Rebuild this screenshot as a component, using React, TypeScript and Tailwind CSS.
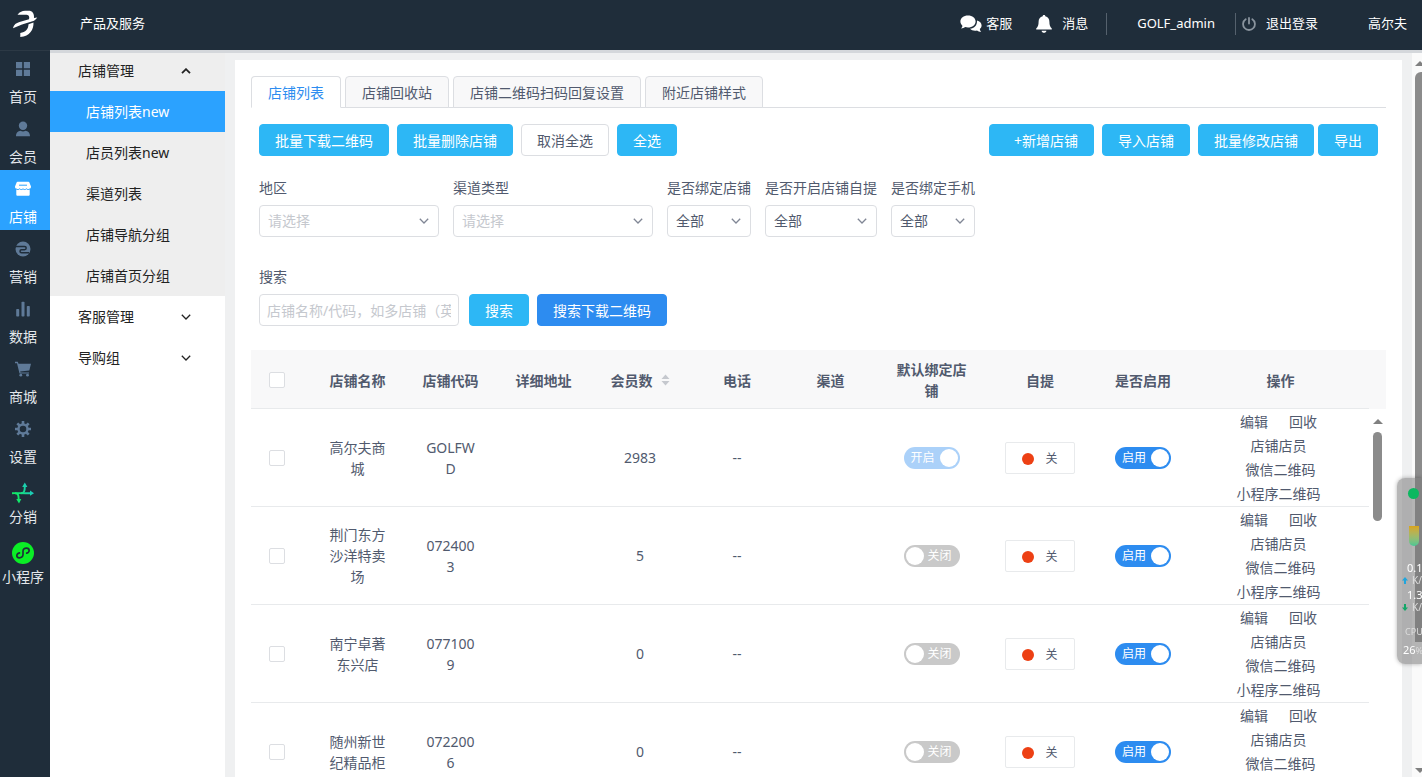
import React, { useState } from 'react';

const FONT = "font-['Noto_Sans','Noto_Sans_CJK_SC',sans-serif]";

const Chevron = ({ up = false, className = '' }: { up?: boolean; className?: string }) => (
  <svg viewBox="0 0 10 6" className={className} fill="none" stroke="currentColor" strokeWidth={up ? 1.8 : 1.3} aria-hidden="true">
    <path d={up ? 'M1 5.2 5 1.2 9 5.2' : 'M.8.8 5 5 9.2.8'} />
  </svg>
);

const Logo = () => (
  <svg viewBox="0 0 26 28" className="h-7 w-[26px]" fill="#fff" aria-hidden="true">
    <path d="M5.500 4.800C8 1.800 10 .8 13 .8h3.500C20.500.8 22.300 3.500 22 8l3.200-.6C24 9.300 22.800 10.500 20.500 11.300L10 14.500 1 18.200C2 14.300 4 13 7.500 11.900L17 9.300C17.800 6 16.500 4.800 13.500 4.800z" />
    <path d="M16.500 14.300 21.500 12.600C21.800 19.500 18 26.500 8.300 27v-4C13.500 22.300 16.300 19.500 16.500 14.300z" />
  </svg>
);

const NavIcon = ({ name }: { name: string }) => {
  const base = 'h-4 w-4';
  switch (name) {
    case 'home':
      return (
        <svg viewBox="0 0 16 16" className={base} fill="currentColor"><path d="M1 1h6.200v6.200H1zM8.800 1H15v6.200H8.800zM1 8.800h6.200V15H1zM8.800 8.800H15V15H8.800z" /></svg>
      );
    case 'member':
      return (
        <svg viewBox="0 0 16 16" className={base} fill="currentColor"><circle cx="8" cy="4.800" r="4.200" /><path d="M1 15.200c0-3.500 2-5 4.500-5.400 1.500.8 3.500.8 5 0 2.500.4 4.500 1.900 4.500 5.400z" /></svg>
      );
    case 'shop':
      return (
        <svg viewBox="0 0 16 16" className={base}>
          <path fill="#fff" d="M3 .8h10c.8 0 1.200.3 1.500 1L16 5.600c0 1.400-.6 2-1.300 2.300v5.600c0 .9-.5 1.300-1.300 1.300H2.600c-.8 0-1.300-.4-1.300-1.300V7.900C.6 7.600 0 7 0 5.600l1.500-3.800c.3-.7.7-1 1.500-1z" />
          <path stroke="#2ba2ff" fill="none" strokeWidth="1" d="M1 7.800c1.200 1 2.700 1 3.600 0 1 1 2.400 1 3.400 0 1 1 2.400 1 3.400 0 1 1 2.500 1 3.600 0M4 4.200h8" />
        </svg>
      );
    case 'market':
      return (
        <svg viewBox="0 0 16 16" className={base}>
          <circle cx="8" cy="8" r="7.500" fill="currentColor" />
          <path stroke="#1f2d3a" fill="none" strokeWidth="1.500" d="M0 5.400h9.500a1.700 1.700 0 0 1 0 3.400h-3a1.500 1.500 0 0 0 0 3H14" />
        </svg>
      );
    case 'data':
      return (
        <svg viewBox="0 0 16 16" className={base} fill="currentColor"><rect x="1.200" y="8" width="3" height="7.500" rx=".8" /><rect x="6.500" y=".8" width="3" height="14.700" rx=".8" /><rect x="11.800" y="5" width="3" height="10.500" rx=".8" /></svg>
      );
    case 'mall':
      return (
        <svg viewBox="0 0 16 16" className={base} fill="currentColor"><path d="M0 .8h2.800l.7 2H16L14.300 9.500 5.200 10.400l.3 1H14v1.200H4.500L2 2.200H0z" /><circle cx="5.800" cy="14.200" r="1.400" /><circle cx="12.500" cy="14.200" r="1.400" /></svg>
      );
    case 'setting':
      return (
        <svg viewBox="0 0 16 16" className={base} fill="none" stroke="currentColor">
          <circle cx="8" cy="8" r="4.500" strokeWidth="2.400" />
          <path strokeWidth="2.600" d="M8 0v3M8 13v3M0 8h3M13 8h3M2.300 2.300l2.200 2.200M11.500 11.500l2.200 2.200M2.300 13.700l2.200-2.200M11.500 4.500l2.200-2.200" />
        </svg>
      );
    case 'distribute':
      return (
        <svg viewBox="0 0 22 22" className="h-[22px] w-[22px]" fill="none">
          <defs>
            <linearGradient id="dist" gradientUnits="userSpaceOnUse" x1="0" y1="18" x2="20" y2="4">
              <stop offset="0.300" stopColor="#12e86a" /><stop offset="1" stopColor="#1fc3cf" />
            </linearGradient>
          </defs>
          <g stroke="url(#dist)" strokeWidth="1.900">
            <path d="M0 11.200C2.500 11 5 11.300 19 11.200" />
            <path d="M3 11.200C5.800 11.300 6.700 12.500 6.700 17.500" />
            <path d="M9 11.200C12 11 12.800 9.500 12.800 4.500" />
          </g>
          <path fill="url(#dist)" d="M12.800.5 15.400 5H10.200zM22 11.200 18 13.800V8.600zM7 21.500 4.300 17h5z" />
        </svg>
      );
    default:
      return (
        <svg viewBox="0 0 22 22" className="h-[22px] w-[22px]">
          <circle cx="11" cy="11" r="11" fill="#0bee26" />
          <path fill="none" stroke="#1f2d3a" strokeWidth="1.700" strokeLinecap="round" d="M7.500 10.800c-3.400.7-3.600 5-.3 5.100 2.400.1 3.800-1.400 3.800-3.400V9.300c0-2 1.400-3.300 3.600-3.200 3.300.1 3.400 4.300.1 5.100" />
        </svg>
      );
  }
};

const navItems = [
  ['home', '首页'], ['member', '会员'], ['shop', '店铺'], ['market', '营销'], ['data', '数据'],
  ['mall', '商城'], ['setting', '设置'], ['distribute', '分销'], ['mini', '小程序'],
];

const Header = () => (
  <header className="flex h-[50px] shrink-0 items-center bg-[#1f2d3a] pb-[3px] text-[13px] text-white">
    <a href="#" aria-label="主页" className="flex w-[50px] justify-center"><Logo /></a>
    <a href="#" className="ml-[30px]">产品及服务</a>
    <div className="ml-auto flex items-center">
      <a href="#" className="flex items-center gap-1">
        <svg viewBox="0 0 22 18" className="h-[18px] w-[22px]" fill="#fff" aria-hidden="true">
          <path d="M8 .5c4.400 0 7.600 2.600 7.600 6s-3.200 6-7.600 6c-1 0-2-.1-2.800-.4-1 .8-2.400 1.300-4.200 1.300 1-.9 1.400-1.800 1.400-2.700C1.200 9.600.4 8.200.4 6.500c0-3.400 3.200-6 7.600-6z" />
          <path d="M17 5.500c2.700.7 4.600 2.500 4.600 4.900 0 1.500-.7 2.700-1.800 3.600 0 1 .5 1.900 1.400 2.800-1.800 0-3.200-.5-4.200-1.300-2.700.6-5.600-.1-7-1.700 4.300-.4 7.300-3.300 7-8.300z" />
        </svg>
        客服
      </a>
      <a href="#" className="ml-6 flex items-center gap-[10px]">
        <svg viewBox="0 0 16 18" className="h-[18px] w-4" fill="#fff" aria-hidden="true">
          <path d="M8 0c.8 0 1.300.5 1.300 1.300C12 2 13.400 4 13.400 6.800c0 3.500.7 5.200 2.400 6.700v1H.2v-1c1.700-1.500 2.400-3.200 2.400-6.700C2.600 4 4 2 6.700 1.300 6.700.5 7.200 0 8 0zM5.600 15.800h4.800c-.2 2.700-4.600 2.700-4.800 0z" />
        </svg>
        消息
      </a>
      <span className="ml-[18px] h-[22px] w-px bg-[#55616d]" />
      <span className="ml-[30px]">GOLF_admin</span>
      <span className="ml-5 h-[22px] w-px bg-[#55616d]" />
      <button type="button" className="ml-[6px] flex items-center gap-[10px]">
        <svg viewBox="0 0 14 14" className="h-[14px] w-[14px] text-[#8a949e]" fill="none" stroke="currentColor" strokeWidth="1.800" strokeLinecap="round" aria-hidden="true">
          <path d="M7 .9v5.600M3.700 2.200a5.900 5.900 0 1 0 6.600 0" />
        </svg>
        退出登录
      </button>
      <span className="mr-[15px] ml-[50px]">高尔夫</span>
    </div>
  </header>
);

const Rail = () => (
  <nav className="w-[50px] shrink-0 bg-[#1f2d3a] shadow-[inset_0_1px_0_#2c3945]">
    {navItems.map(([icon, label]) => (
      <a key={icon} href="#" className={`flex h-[60px] flex-col items-center pr-1 text-sm whitespace-nowrap ${icon === 'shop' ? 'bg-[#2ba2ff] text-white' : 'text-[#e4e8ec]'}`}>
        <span className={`flex h-[38px] shrink-0 items-center text-[#5f7a98] ${icon === 'distribute' || icon === 'mini' ? 'pt-2' : ''}`}><NavIcon name={icon} /></span>
        <span className="-mt-px leading-5">{label}</span>
      </a>
    ))}
  </nav>
);

const Side = () => (
  <aside className="w-[175px] shrink-0 bg-white text-sm text-[#222]">
    <div className="bg-[#eee] shadow-[inset_0_3px_0_#d4d7db]">
      <button type="button" className="flex h-[41px] w-full items-center justify-between pr-[34px] pl-7">店铺管理<Chevron up className="h-[6px] w-[10px]" /></button>
      {['店铺列表new', '店员列表new', '渠道列表', '店铺导航分组', '店铺首页分组'].map((t, i) => (
        <a key={t} href="#" className={`flex h-[41px] items-center pl-9 ${i === 0 ? 'bg-[#2ba2ff] text-white' : ''}`}>{t}</a>
      ))}
    </div>
    {['客服管理', '导购组'].map((t) => (
      <button key={t} type="button" className="flex h-[41px] w-full items-center justify-between pr-[34px] pl-7">{t}<Chevron className="h-[6px] w-[10px]" /></button>
    ))}
  </aside>
);

const Btn = ({ children, kind = 'info', pad = 'px-[15px]', className = '' }: { children: React.ReactNode; kind?: 'info' | 'primary' | 'plain'; pad?: string; className?: string }) => {
  const look = {
    info: 'border-[#2db7f5] bg-[#2db7f5] text-white',
    primary: 'border-[#2d8cf0] bg-[#2d8cf0] text-white',
    plain: 'border-[#dcdee2] bg-white text-[#515a6e]',
  }[kind];
  return <button type="button" className={`h-8 rounded border pt-[2px] text-sm whitespace-nowrap ${pad} ${look} ${className}`}>{children}</button>;
};

const Pick = ({ id, label, value, width, muted = false }: { id: string; label: string; value: string; width: string; muted?: boolean }) => (
  <div className={width}>
    <label htmlFor={id} className="block leading-6 whitespace-nowrap">{label}</label>
    <div className="relative mt-[5px]">
      <select id={id} className={`h-8 w-full appearance-none rounded border border-[#dcdee2] bg-white px-2 text-sm ${muted ? 'text-[#c5c8ce]' : 'text-[#515a6e]'}`}>
        <option>{value}</option>
      </select>
      <Chevron className="pointer-events-none absolute top-[13px] right-[10px] h-[6px] w-[10px] text-[#808695]" />
    </div>
  </div>
);

const Switch = ({ on, text, label, faded = false }: { on: boolean; text: string; label: string; faded?: boolean }) => (
  <button
    type="button"
    role="switch"
    aria-checked={on}
    aria-label={label}
    className={`inline-flex h-[22px] w-14 items-center justify-between rounded-full align-middle text-xs text-white ${on ? 'flex-row pr-[2px] pl-[7px]' : 'flex-row-reverse pr-2 pl-[2px]'} ${on ? (faded ? 'bg-[#abd1f9]' : 'bg-[#2d8cf0]') : 'bg-[#c9c9c9]'}`}
  >
    <span>{text}</span>
    <span className="h-[18px] w-[18px] rounded-full bg-white" />
  </button>
);

const Check = ({ label }: { label: string }) => (
  <input type="checkbox" aria-label={label} className="block h-4 w-4 appearance-none rounded-xs border border-[#dcdee2] bg-white checked:bg-[#2d8cf0]" />
);

const rows = [
  { name: '高尔夫商城', code: 'GOLFWD', count: 2983, bound: true },
  { name: '荆门东方沙洋特卖场', code: '0724003', count: 5, bound: false },
  { name: '南宁卓著东兴店', code: '0771009', count: 0, bound: false },
  { name: '随州新世纪精品柜', code: '0722006', count: 0, bound: false },
];

const StoreTable = () => (
  <div className="mt-6 flex">
    <table className="min-w-0 flex-1 table-fixed border-separate border-spacing-0 text-center leading-[21px]">
      <colgroup>
        <col className="w-[60px]" /><col className="w-[93px]" /><col className="w-[93px]" /><col className="w-[93px]" />
        <col className="w-[100px]" /><col className="w-[94px]" /><col className="w-[93px]" /><col className="w-[109px]" />
        <col className="w-[108px]" /><col className="w-[98px]" /><col className="w-[177px]" />
      </colgroup>
      <thead>
        <tr className="h-[59px] [&>th]:border-b [&>th]:border-[#e8eaec] [&>th]:bg-[#f8f8f9] [&>th]:px-[18px] [&>th]:pt-[2px] [&>th]:font-bold">
          <th><Check label="选择全部" /></th>
          <th>店铺名称</th>
          <th>店铺代码</th>
          <th>详细地址</th>
          <th className="whitespace-nowrap">
            <span className="inline-flex items-center gap-2">会员数
              <svg viewBox="0 0 9 12" className="h-3 w-[9px]" fill="#c5c8ce" aria-hidden="true"><path d="M4.500.5 8.500 5h-8zM4.500 11.500.5 7h8z" /></svg>
            </span>
          </th>
          <th>电话</th>
          <th>渠道</th>
          <th>默认绑定店铺</th>
          <th>自提</th>
          <th>是否启用</th>
          <th>操作</th>
        </tr>
      </thead>
      <tbody>
        {rows.map((r) => (
          <tr key={r.code} className="h-[98px] [&>td]:border-b [&>td]:border-[#e8eaec]">
            <td className="px-[18px]"><Check label={r.name} /></td>
            <td className="px-[18px]">{r.name}</td>
            <td className="px-5 break-all">{r.code}</td>
            <td />
            <td>{r.count}</td>
            <td>--</td>
            <td />
            <td><Switch on={r.bound} faded text={r.bound ? '开启' : '关闭'} label="默认绑定店铺" /></td>
            <td>
              <button type="button" className="inline-flex h-8 w-[70px] items-center justify-center gap-[11px] rounded-xs border border-[#e8eaec] bg-white pt-[2px] align-middle text-xs">
                <span className="h-3 w-3 rounded-full bg-[#ed4014]" />关
              </button>
            </td>
            <td><Switch on text="启用" label="是否启用" /></td>
            <td className="leading-6">
              <div className="flex flex-col items-center">
                <div className="mr-1 flex gap-[21px]"><a href="#">编辑</a><a href="#">回收</a></div>
                <a href="#" className="mr-1">店铺店员</a>
                <a href="#">微信二维码</a>
                <a href="#" className="mr-1">小程序二维码</a>
              </div>
            </td>
          </tr>
        ))}
      </tbody>
    </table>
    <div className="flex w-[17px] shrink-0 flex-col items-center" aria-hidden="true">
      <div className="h-[59px] w-full bg-[#f8f8f9]" />
      <div className="mt-[10px] h-0 w-0 border-x-[5px] border-b-[5px] border-x-transparent border-b-[#808080]" />
      <div className="mt-2 h-[89px] w-[9px] rounded-full bg-[#8b8b8b]" />
    </div>
  </div>
);

const SystemMonitor = () => (
  <div className="fixed top-[478px] right-0 h-[186px] w-[25px] overflow-hidden rounded-l-lg bg-[#7a7a7a]/55 text-[11px] leading-3 whitespace-nowrap text-white shadow-[0_0_4px_rgba(0,0,0,0.3)]">
    <div className="mt-[10px] ml-[11px] h-[11px] w-[11px] rounded-full bg-[#0cb860]" />
    <div className="mt-[27px] ml-3 h-5 w-[10px] rounded-b-md bg-gradient-to-b from-[#d9a515] to-[#45c795]" />
    <div className="mt-4 pl-[10px]">0.1</div>
    <div className="flex items-center gap-1 pl-[5px] text-[10px] text-[#ddd]">
      <svg viewBox="0 0 6 7" className="h-[7px] w-[6px] shrink-0" fill="#20a5dc"><path d="M3 0 6 3.500H4V7H2V3.500H0z" /></svg>K/
    </div>
    <div className="mt-[3px] pl-[10px]">1.3</div>
    <div className="flex items-center gap-1 pl-[5px] text-[10px] text-[#ddd]">
      <svg viewBox="0 0 6 7" className="h-[7px] w-[6px] shrink-0" fill="#12a768"><path d="M3 7 6 3.500H4V0H2v3.500H0z" /></svg>K/
    </div>
    <div className="mt-[13px] pl-2 text-[9px] text-[#ddd]">CPU</div>
    <div className="mt-[6px] pl-[6px]">26<span className="text-[9px] text-[#ddd]">%</span></div>
  </div>
);

export default function App() {
  const [tab, setTab] = useState(0);
  const tabs = ['店铺列表', '店铺回收站', '店铺二维码扫码回复设置', '附近店铺样式'];
  return (
    <div className={`flex h-screen flex-col overflow-hidden ${FONT}`}>
      <Header />
      <div className="flex min-h-0 flex-1">
        <Rail />
        <Side />
        <main className="min-w-0 flex-1 overflow-hidden border-t-3 border-[#d4d7db] bg-[#eff0f1] px-[10px] pt-[7px]">
          <div className="min-h-full bg-white p-4 text-sm text-[#515a6e]">
            <div role="tablist" className="flex gap-1 border-b border-[#dcdee2]">
              {tabs.map((t, i) => (
                <button
                  key={t}
                  type="button"
                  role="tab"
                  aria-selected={tab === i}
                  onClick={() => setTab(i)}
                  className={`-mb-px h-8 rounded-t border px-4 pt-[2px] ${tab === i ? 'border-[#dcdee2] border-b-white bg-white text-[#2d8cf0]' : 'border-[#dcdee2] bg-[#f8f8f9]'}`}
                >
                  {t}
                </button>
              ))}
            </div>
            <div className="px-2 pt-4">
              <div className="flex flex-wrap justify-between gap-y-2">
                <div className="flex gap-2">
                  <Btn>批量下载二维码</Btn><Btn>批量删除店铺</Btn><Btn kind="plain">取消全选</Btn><Btn>全选</Btn>
                </div>
                <div className="flex">
                  <Btn pad="pr-[15px] pl-6" className="mr-2">+新增店铺</Btn><Btn className="mr-2">导入店铺</Btn><Btn className="mr-1">批量修改店铺</Btn><Btn>导出</Btn>
                </div>
              </div>
              <div className="mt-5 flex flex-wrap gap-[14px]">
                <Pick id="area" label="地区" value="请选择" width="w-[180px]" muted />
                <Pick id="channel" label="渠道类型" value="请选择" width="w-[200px]" muted />
                <Pick id="bindShop" label="是否绑定店铺" value="全部" width="w-[84px]" />
                <Pick id="pickup" label="是否开启店铺自提" value="全部" width="w-28" />
                <Pick id="bindPhone" label="是否绑定手机" value="全部" width="w-[84px]" />
              </div>
              <div className="mt-7">
                <label htmlFor="q" className="block leading-6">搜索</label>
                <div className="mt-[5px] flex">
                  <input id="q" type="text" placeholder="店铺名称/代码，如多店铺（英文逗号隔开）" className="h-8 w-[200px] rounded border border-[#dcdee2] px-[7px] text-sm placeholder:text-[#c5c8ce]" />
                  <Btn className="ml-[10px]">搜索</Btn>
                  <Btn kind="primary" className="ml-2">搜索下载二维码</Btn>
                </div>
              </div>
            </div>
            <StoreTable />
          </div>
        </main>
        <div className="flex w-[10px] shrink-0 flex-col items-end overflow-hidden border-t-3 border-[#d4d7db] bg-[#fafafa]" aria-hidden="true">
          <div className="mt-2 -mr-[3px] h-0 w-0 border-x-[5px] border-b-[5px] border-x-transparent border-b-[#808080]" />
          <div className="mt-[6px] h-[570px] w-[7px] shrink-0 rounded-tl-md bg-[#8b8b8b]" />
          <div className="mt-auto -mr-[3px] mb-1 h-0 w-0 border-x-[5px] border-t-[5px] border-x-transparent border-t-[#808080]" />
        </div>
      </div>
      <SystemMonitor />
    </div>
  );
}
